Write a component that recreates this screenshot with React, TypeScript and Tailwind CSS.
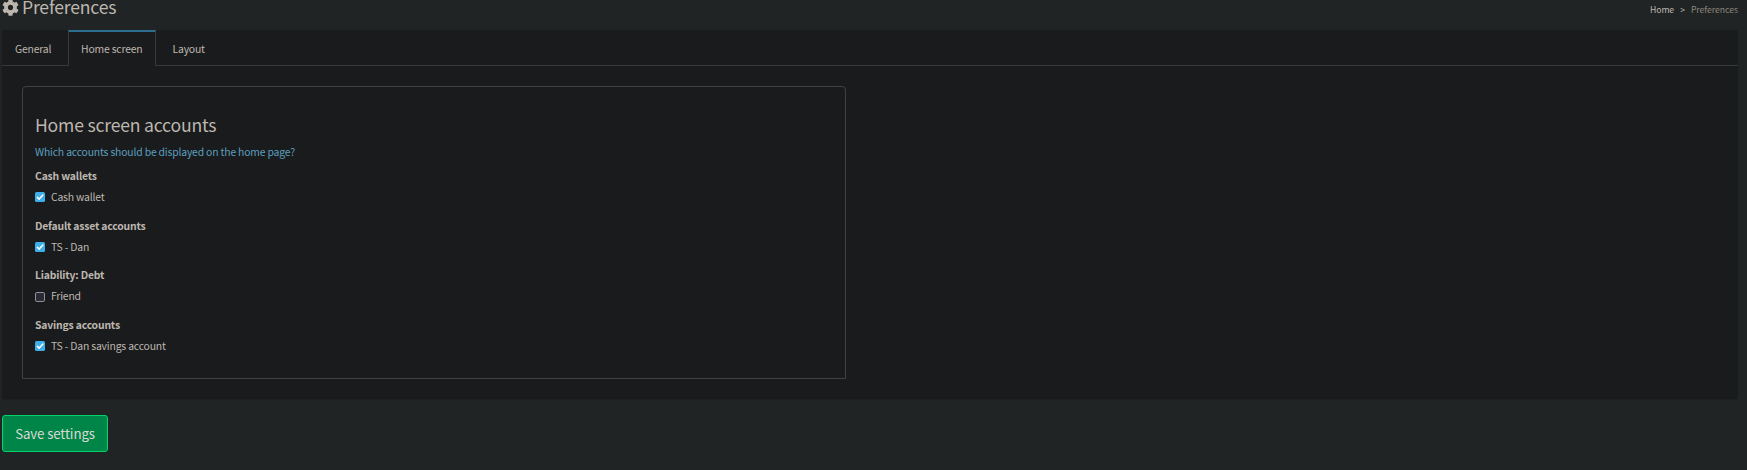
import { FaCog } from "react-icons/fa";

type Account = { name: string; checked: boolean };
type Group = { title: string; accounts: Account[] };

const groups: Group[] = [
  { title: "Cash wallets", accounts: [{ name: "Cash wallet", checked: true }] },
  { title: "Default asset accounts", accounts: [{ name: "TS - Dan", checked: true }] },
  { title: "Liability: Debt", accounts: [{ name: "Friend", checked: false }] },
  { title: "Savings accounts", accounts: [{ name: "TS - Dan savings account", checked: true }] },
];

function Checkbox({ checked }: { checked: boolean }) {
  if (!checked) {
    return <span className="mt-[6px] h-[10px] w-[10px] shrink-0 rounded-[2px] border border-[#8f8f9d] bg-[#2b2a33]" />;
  }
  return (
    <span className="mt-[5.4px] h-[10px] w-[10px] shrink-0 rounded-[1.5px] bg-[#3daee9]">
      <svg viewBox="0 0 10 10" className="block h-[10px] w-[10px]" fill="none" stroke="#fff" strokeWidth="1.5" strokeLinecap="round" strokeLinejoin="round">
        <path d="M2.3 5.2 4.2 7.1 7.9 3" />
      </svg>
    </span>
  );
}

export default function App() {
  return (
    <div className="h-[470px] overflow-hidden bg-[#202425] pr-[9px] pl-[2px] font-['Noto_Sans_CJK_SC',sans-serif] text-[10.4px] leading-5 tracking-[-0.18px] whitespace-nowrap text-[#bdb7af]">
      <header className="flex h-[30px] items-start justify-between">
        <h1 className="-mt-[6px] flex items-center text-[17.6px] leading-[26px] tracking-[-0.2px]">
          <FaCog className="mr-[3px] h-[17px] w-[17px]" />
          Preferences
        </h1>
        <nav className="flex gap-[6px] text-[8.7px] leading-[19px] tracking-[-0.05px]">
          <a>Home</a>
          <span>&gt;</span>
          <span className="text-[#8c857b]">Preferences</span>
        </nav>
      </header>

      <main className="h-[369px] rounded-[3px] bg-[#1a1b1d] shadow-[0_1px_1px_rgba(0,0,0,0.1)]">
        <div className="flex h-[36px]">
          <div className="w-[66px] border-b border-[#37393b] pt-[9px] pl-[13px]">General</div>
          <div className="w-[88px] border-x border-t-2 border-x-[#37393b] border-t-[#2e6d92] pt-[7px] pl-[12px]">Home screen</div>
          <div className="flex-1 border-b border-[#37393b] pt-[9px] pl-[16.5px]">Layout</div>
        </div>
        <section className="mt-[20px] ml-[20px] h-[293px] w-[824px] rounded-t-[4px] border border-[#3f4244] pt-[24px] pl-[12px]">
          <h2 className="text-[17.6px] leading-[28px] tracking-[-0.2px]">Home screen accounts</h2>
          <p className="mt-[3px] text-[#5a9fbf]">Which accounts should be displayed on the home page?</p>
          <div className="mt-[4px]">
            {groups.map((group) => (
              <div key={group.title} className="h-[49.5px]">
                <h3 className="font-bold leading-5">{group.title}</h3>
                {group.accounts.map((account) => (
                  <label key={account.name} className="mt-[1px] flex gap-[6px]">
                    <Checkbox checked={account.checked} />
                    {account.name}
                  </label>
                ))}
              </div>
            ))}
          </div>
        </section>
      </main>

      <button className="mt-[16px] flex h-[37px] w-[106px] items-center justify-center rounded-[3px] border border-[#00d46a] bg-[#008548] text-[13.3px] tracking-[-0.12px] text-[#dcd9d4]">
        Save settings
      </button>
    </div>
  );
}
